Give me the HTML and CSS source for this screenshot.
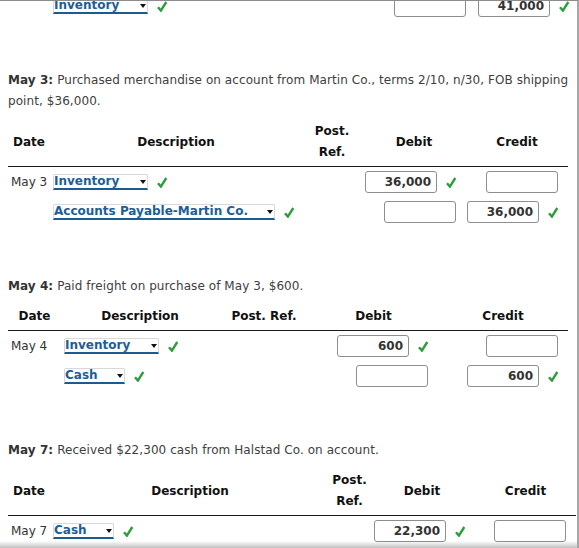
FILE: index.html
```html
<!DOCTYPE html>
<html>
<head>
<meta charset="utf-8">
<link rel="stylesheet" href="styles.css">
</head>
<body>
<div class="frame">
  <table class="journal t0">
    <colgroup><col class="w42"><col class="w280"><col class="w39"><col class="w107"><col class="w103"></colgroup>
    <tbody>
      <tr>
        <td class="date"></td>
        <td class="desc"><div class="cell"><span class="sel w-inv">Inventory</span><svg class="chk" viewBox="0 0 10 11"><path d="M1 6.2 L3.9 9.6 L9.3 1"/></svg></div></td>
        <td></td>
        <td class="amt"><div class="cell"><span class="inp"></span></div></td>
        <td class="amt"><div class="cell"><span class="inp">41,000</span><svg class="chk" viewBox="0 0 10 11"><path d="M1 6.2 L3.9 9.6 L9.3 1"/></svg></div></td>
      </tr>
    </tbody>
  </table>

  <section class="entry">
    <p class="prompt"><b>May 3:</b> Purchased merchandise on account from Martin Co., terms 2/10, n/30, FOB shipping point, $36,000.</p>
    <table class="journal">
      <colgroup><col class="w42"><col class="w252"><col class="w60"><col class="w104"><col class="w102"></colgroup>
      <thead>
        <tr><th>Date</th><th>Description</th><th>Post.<br>Ref.</th><th>Debit</th><th>Credit</th></tr>
      </thead>
      <tbody>
        <tr>
          <td class="date">May 3</td>
          <td class="desc"><div class="cell"><span class="sel w-inv">Inventory</span><svg class="chk" viewBox="0 0 10 11"><path d="M1 6.2 L3.9 9.6 L9.3 1"/></svg></div></td>
          <td></td>
          <td class="amt"><div class="cell"><span class="inp">36,000</span><svg class="chk" viewBox="0 0 10 11"><path d="M1 6.2 L3.9 9.6 L9.3 1"/></svg></div></td>
          <td class="amt"><div class="cell"><span class="inp"></span></div></td>
        </tr>
        <tr>
          <td class="date"></td>
          <td class="desc"><div class="cell"><span class="sel w-ap">Accounts Payable-Martin Co.</span><svg class="chk" viewBox="0 0 10 11"><path d="M1 6.2 L3.9 9.6 L9.3 1"/></svg></div></td>
          <td></td>
          <td class="amt"><div class="cell"><span class="inp"></span></div></td>
          <td class="amt"><div class="cell"><span class="inp">36,000</span><svg class="chk" viewBox="0 0 10 11"><path d="M1 6.2 L3.9 9.6 L9.3 1"/></svg></div></td>
        </tr>
      </tbody>
    </table>
  </section>

  <section class="entry">
    <p class="prompt"><b>May 4:</b> Paid freight on purchase of May 3, $600.</p>
    <table class="journal single">
      <colgroup><col class="w53"><col class="w158"><col class="w90"><col class="w129"><col class="w130"></colgroup>
      <thead>
        <tr><th>Date</th><th>Description</th><th>Post. Ref.</th><th>Debit</th><th>Credit</th></tr>
      </thead>
      <tbody>
        <tr>
          <td class="date">May 4</td>
          <td class="desc"><div class="cell"><span class="sel w-inv">Inventory</span><svg class="chk" viewBox="0 0 10 11"><path d="M1 6.2 L3.9 9.6 L9.3 1"/></svg></div></td>
          <td></td>
          <td class="amt"><div class="cell"><span class="inp">600</span><svg class="chk" viewBox="0 0 10 11"><path d="M1 6.2 L3.9 9.6 L9.3 1"/></svg></div></td>
          <td class="amt"><div class="cell"><span class="inp"></span></div></td>
        </tr>
        <tr>
          <td class="date"></td>
          <td class="desc"><div class="cell"><span class="sel w-cash">Cash</span><svg class="chk" viewBox="0 0 10 11"><path d="M1 6.2 L3.9 9.6 L9.3 1"/></svg></div></td>
          <td></td>
          <td class="amt"><div class="cell"><span class="inp"></span></div></td>
          <td class="amt"><div class="cell"><span class="inp">600</span><svg class="chk" viewBox="0 0 10 11"><path d="M1 6.2 L3.9 9.6 L9.3 1"/></svg></div></td>
        </tr>
      </tbody>
    </table>
  </section>

  <section class="entry">
    <p class="prompt"><b>May 7:</b> Received $22,300 cash from Halstad Co. on account.</p>
    <table class="journal wide">
      <colgroup><col class="w42"><col class="w280"><col class="w39"><col class="w106"><col class="w101"></colgroup>
      <thead>
        <tr><th>Date</th><th>Description</th><th>Post.<br>Ref.</th><th>Debit</th><th>Credit</th></tr>
      </thead>
      <tbody>
        <tr>
          <td class="date">May 7</td>
          <td class="desc"><div class="cell"><span class="sel w-cash">Cash</span><svg class="chk" viewBox="0 0 10 11"><path d="M1 6.2 L3.9 9.6 L9.3 1"/></svg></div></td>
          <td></td>
          <td class="amt"><div class="cell"><span class="inp">22,300</span><svg class="chk" viewBox="0 0 10 11"><path d="M1 6.2 L3.9 9.6 L9.3 1"/></svg></div></td>
          <td class="amt"><div class="cell"><span class="inp"></span></div></td>
        </tr>
      </tbody>
    </table>
  </section>
</div>
</body>
</html>
```
FILE: styles.css
```css
html, body {
  margin: 0;
  padding: 0;
  background: #fff;
}

body {
  font-family: "DejaVu Sans", Verdana, sans-serif;
  font-size: 12px;
  color: #333;
}

.frame {
  box-sizing: border-box;
  width: 579px;
  height: 548px;
  border-top: 1px solid #8c8c8c;
  border-right: 2px solid #a6a6a6;
  padding-left: 8px;
  overflow: hidden;
  position: relative;
}

.frame::after {
  content: "";
  position: absolute;
  left: 0;
  right: 0;
  bottom: 0;
  height: 7px;
  background: linear-gradient(rgba(0, 0, 0, 0), rgba(0, 0, 0, 0.24));
}

.entry {
  margin-top: 49px;
}

.prompt {
  margin: 0;
  width: 575px;
  line-height: 21px;
  letter-spacing: 0.07px;
  color: #404040;
}

.prompt b {
  color: #333;
}

.journal {
  border-collapse: collapse;
  table-layout: fixed;
  margin-top: 9px;
}

.journal.t0 {
  margin-top: -10px;
  width: 571px;
}

.journal.wide {
  width: 568px;
}

.journal:not(.t0):not(.wide) {
  width: 560px;
}

col.w39 { width: 39px; }
col.w42 { width: 42px; }
col.w53 { width: 53px; }
col.w60 { width: 60px; }
col.w90 { width: 90px; }
col.w101 { width: 101px; }
col.w102 { width: 102px; }
col.w103 { width: 103px; }
col.w104 { width: 104px; }
col.w106 { width: 106px; }
col.w107 { width: 107px; }
col.w129 { width: 129px; }
col.w130 { width: 130px; }
col.w158 { width: 158px; }
col.w252 { width: 252px; }
col.w280 { width: 280px; }

.journal th {
  font-weight: bold;
  color: #111;
  line-height: 21px;
  padding: 0 0 3px 0;
  text-align: center;
  vertical-align: middle;
  border-bottom: 1px solid #1a1a1a;
  white-space: nowrap;
}

.journal td {
  height: 30px;
  padding: 0;
  vertical-align: middle;
  white-space: nowrap;
}

.journal td.date {
  padding-left: 3px;
  color: #333;
}

.journal td.desc {
  padding-left: 3px;
}

.journal td.amt {
  padding-right: 10px;
}

.cell {
  display: flex;
  align-items: center;
  gap: 9px;
}

.amt .cell {
  justify-content: flex-end;
}

.sel {
  position: relative;
  box-sizing: border-box;
  display: inline-block;
  height: 16px;
  line-height: 13px;
  padding-left: 0;
  font-weight: bold;
  color: #1c5e97;
  background: #fff;
  border: 1px solid #d8d8d8;
  border-bottom: 2px solid #1d5b8e;
  border-radius: 2px 2px 0 0;
}

.sel::after {
  content: "";
  position: absolute;
  right: 1px;
  top: 5px;
  border-left: 3.5px solid transparent;
  border-right: 3.5px solid transparent;
  border-top: 4px solid #111;
}

.w-inv { width: 95px; }
.w-ap { width: 222px; }
.w-cash { width: 61px; }

.inp {
  box-sizing: border-box;
  display: inline-block;
  width: 72px;
  height: 22px;
  line-height: 20px;
  padding-right: 5px;
  text-align: right;
  font-weight: bold;
  color: #333;
  background: #fff;
  border: 1px solid #8e8e8e;
  border-radius: 3px;
}

.chk {
  width: 10px;
  height: 11px;
  flex: none;
}

.chk path {
  fill: none;
  stroke: #2f9e3a;
  stroke-width: 2.4;
  stroke-linecap: butt;
  stroke-linejoin: miter;
}
```
